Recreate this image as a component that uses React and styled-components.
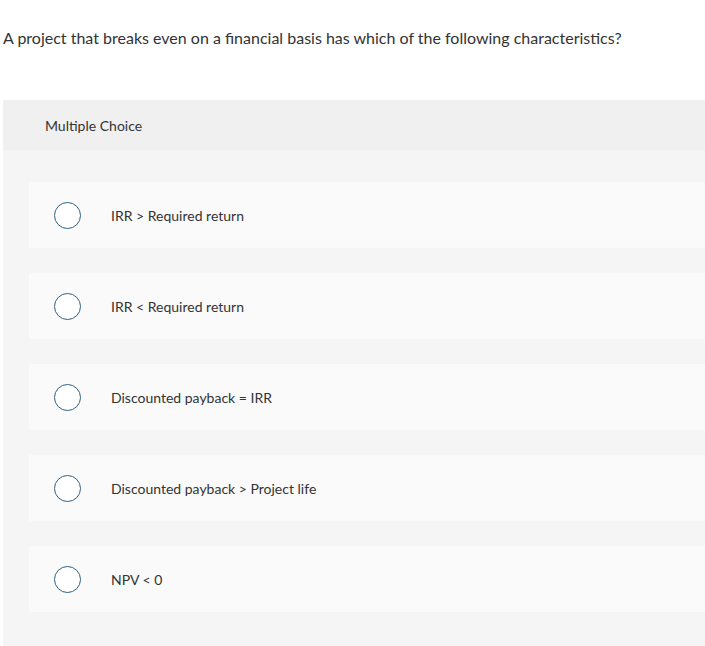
import React from 'react'
import styled, { createGlobalStyle } from 'styled-components'

const Global = createGlobalStyle`
  html, body {
    margin: 0;
    padding: 0;
    background: #ffffff;
    overflow: hidden;
  }
  body {
    font-family: "Lato", "Open Sans", Arial, sans-serif;
    color: #333333;
  }
`

const Page = styled.div`
  width: 705px;
  height: 646px;
  overflow: hidden;
`

const Question = styled.p`
  margin: 0;
  padding: 28px 0 0 3px;
  font-size: 16px;
  line-height: 20px;
  color: #333;
`

const Panel = styled.div`
  margin: 52px 0 0 3px;
  width: 760px;
  background: #f5f5f5;
  padding-bottom: 40px;
`

const Header = styled.div`
  height: 50px;
  background: #f0f0f0;
  display: flex;
  align-items: center;
  padding-left: 42px;
  font-size: 14px;
  color: #333;
`

const Options = styled.div`
  display: flex;
  flex-direction: column;
  gap: 25px;
  padding: 32px 0 0 26px;
`

const Option = styled.div`
  height: 66px;
  background: #fafafa;
  display: flex;
  align-items: center;
  padding-left: 25px;
`

const Radio = styled.span`
  width: 25px;
  height: 25px;
  border: 1.5px solid #2f5f80;
  border-radius: 50%;
  background: #fff;
  flex-shrink: 0;
`

const Label = styled.span`
  margin-left: 30px;
  font-size: 14px;
  color: #333;
`

const choices = [
  'IRR > Required return',
  'IRR < Required return',
  'Discounted payback = IRR',
  'Discounted payback > Project life',
  'NPV < 0',
]

export default function App() {
  return (
    <Page>
      <Global />
      <Question>A project that breaks even on a financial basis has which of the following characteristics?</Question>
      <Panel>
        <Header>Multiple Choice</Header>
        <Options>
          {choices.map((c) => (
            <Option key={c}>
              <Radio />
              <Label>{c}</Label>
            </Option>
          ))}
        </Options>
      </Panel>
    </Page>
  )
}
